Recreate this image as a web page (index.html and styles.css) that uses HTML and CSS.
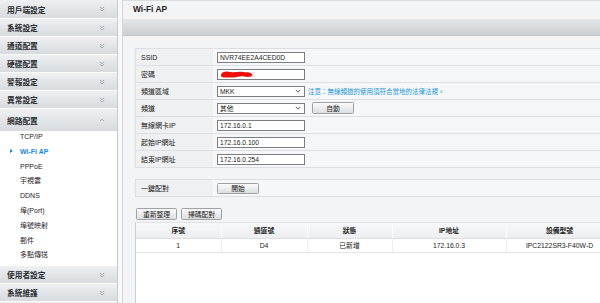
FILE: index.html
```html
<!DOCTYPE html>
<html lang="zh-Hant">
<head>
<meta charset="utf-8">
<title>Wi-Fi AP</title>
<link rel="stylesheet" href="styles.css">
</head>
<body>
<div class="app">
  <aside class="sidebar">
    <div class="nav-head"><span>用戶端設定</span><svg class="chev" viewBox="0 0 7 7"><path d="M1 1.2 L3.5 3 L6 1.2 M1 3.8 L3.5 5.6 L6 3.8"/></svg></div>
    <div class="nav-head"><span>系統設定</span><svg class="chev" viewBox="0 0 7 7"><path d="M1 1.2 L3.5 3 L6 1.2 M1 3.8 L3.5 5.6 L6 3.8"/></svg></div>
    <div class="nav-head"><span>通道配置</span><svg class="chev" viewBox="0 0 7 7"><path d="M1 1.2 L3.5 3 L6 1.2 M1 3.8 L3.5 5.6 L6 3.8"/></svg></div>
    <div class="nav-head"><span>硬碟配置</span><svg class="chev" viewBox="0 0 7 7"><path d="M1 1.2 L3.5 3 L6 1.2 M1 3.8 L3.5 5.6 L6 3.8"/></svg></div>
    <div class="nav-head"><span>警報設定</span><svg class="chev" viewBox="0 0 7 7"><path d="M1 1.2 L3.5 3 L6 1.2 M1 3.8 L3.5 5.6 L6 3.8"/></svg></div>
    <div class="nav-head"><span>異常設定</span><svg class="chev" viewBox="0 0 7 7"><path d="M1 1.2 L3.5 3 L6 1.2 M1 3.8 L3.5 5.6 L6 3.8"/></svg></div>
    <div class="nav-head open"><span>網路配置</span><svg class="chev" viewBox="0 0 7 7"><path d="M1.2 4.6 L3.5 2.6 L5.8 4.6"/></svg></div>
    <ul class="sub">
      <li>TCP/IP</li>
      <li class="active">Wi-Fi AP</li>
      <li>PPPoE</li>
      <li>宇視雲</li>
      <li>DDNS</li>
      <li>埠(Port)</li>
      <li>埠號映射</li>
      <li>郵件</li>
      <li>多點傳送</li>
    </ul>
    <div class="nav-head"><span>使用者設定</span><svg class="chev" viewBox="0 0 7 7"><path d="M1 1.2 L3.5 3 L6 1.2 M1 3.8 L3.5 5.6 L6 3.8"/></svg></div>
    <div class="nav-head"><span>系統維護</span><svg class="chev" viewBox="0 0 7 7"><path d="M1 1.2 L3.5 3 L6 1.2 M1 3.8 L3.5 5.6 L6 3.8"/></svg></div>
  </aside>
  <div class="gutter"></div>
  <main class="main">
    <div class="title">Wi-Fi AP</div>
    <div class="band"></div>
    <div class="content">
      <table class="form">
        <tr><td class="lbl">SSID</td><td><div class="field">NVR74EE2A4CED0D</div></td></tr>
        <tr><td class="lbl">密碼</td><td><div class="field pw"><span class="ghost">••••0S</span><svg class="redact" viewBox="0 0 36 11"><path d="M2 6 C3 2 8 2 12 3 C16 4 20 2 25 3 C29 3.5 33 3 34 5.5 C35 8 30 8.5 26 7.5 C21 6.5 17 9 12 8.6 C7 8.2 1.5 9.5 2 6 Z"/></svg></div></td></tr>
        <tr><td class="lbl">頻道區域</td><td><div class="row-inline"><div class="field sel">MKK<svg class="arrow" viewBox="0 0 8 5"><path d="M1 1 L4 4 L7 1"/></svg></div><span class="note">注意：無線頻道的使用須符合當地的法律法規。</span></div></td></tr>
        <tr><td class="lbl">頻道</td><td><div class="row-inline"><div class="field sel">其他<svg class="arrow" viewBox="0 0 8 5"><path d="M1 1 L4 4 L7 1"/></svg></div><button class="btn auto">自動</button></div></td></tr>
        <tr><td class="lbl">無線網卡IP</td><td><div class="field">172.16.0.1</div></td></tr>
        <tr><td class="lbl">起始IP網址</td><td><div class="field">172.16.0.100</div></td></tr>
        <tr><td class="lbl">結束IP網址</td><td><div class="field">172.16.0.254</div></td></tr>
      </table>
      <table class="form pair">
        <tr><td class="lbl">一鍵配對</td><td><button class="btn start">開始</button></td></tr>
      </table>
      <div class="actions">
        <button class="btn act">重新整理</button>
        <button class="btn act">掃碼配對</button>
      </div>
      <div class="grid">
        <table class="list">
          <colgroup><col class="c1"><col class="c2"><col class="c3"><col class="c4"><col class="c5"></colgroup>
          <thead><tr><th>序號</th><th>通道號</th><th>狀態</th><th>IP地址</th><th>設備型號</th></tr></thead>
          <tbody><tr><td>1</td><td>D4</td><td>已新增</td><td>172.16.0.3</td><td>IPC2122SR3-F40W-D</td></tr></tbody>
        </table>
      </div>
    </div>
  </main>
</div>
</body>
</html>
```

FILE: styles.css
```css
* { box-sizing: border-box; }
html, body { margin: 0; padding: 0; }
body {
  width: 600px;
  height: 303px;
  overflow: hidden;
  background: #f3f4f6;
  font-family: "Liberation Sans", "Noto Sans CJK TC", sans-serif;
  color: #222;
}
.app { display: flex; height: 303px; }

/* sidebar */
.sidebar {
  width: 118px;
  flex: none;
  background: #eceef0;
  border-right: 1px solid #c7cbcf;
}
.nav-head {
  height: 18px;
  display: flex;
  align-items: center;
  justify-content: space-between;
  padding: 0 12px 0 7px;
  background: linear-gradient(#eef0f2, #d7dbde);
  border-bottom: 1px solid #fbfcfc;
  font-size: 7.7px;
  font-weight: bold;
  color: #2a2d31;
}
.nav-head:first-child { height: 19px; }
.nav-head.open { height: 23px; }
.chev { width: 6px; height: 6px; fill: none; stroke: #9aa3aa; stroke-width: 1; }
.sub {
  list-style: none;
  margin: 0;
  padding: 0;
  background: #fff;
  height: 134px;
}
.sub li {
  position: relative;
  height: 14.8px;
  line-height: 9px;
  padding-left: 20px;
  font-size: 7px;
  color: #1f2226;
}
.sub li.active { color: #1a8ad4; font-weight: bold; }
.sub li.active::before {
  content: "";
  position: absolute;
  left: 10px;
  top: 2px;
  border-left: 3px solid #1a8ad4;
  border-top: 2.5px solid transparent;
  border-bottom: 2.5px solid transparent;
}

.gutter {
  width: 5px;
  flex: none;
  background: #f7f8f9;
  border-right: 1px solid #d5d8db;
}

/* main */
.main {
  flex: 1;
  min-width: 0;
  overflow: hidden;
  display: flex;
  flex-direction: column;
}
.title {
  height: 19px;
  border-top: 1px solid #d9dbde;
  padding-left: 10px;
  line-height: 17px;
  font-size: 8.4px;
  font-weight: bold;
  color: #1e2124;
}
.band {
  height: 17px;
  flex: none;
  background: linear-gradient(#e4e7e9, #cacfd2);
  border-bottom: 1px solid #c4c8cb;
}
.content {
  flex: 1;
  padding: 12px 0 0 12px;
  display: flex;
  flex-direction: column;
  width: 489px;
}
.form {
  border-collapse: collapse;
  width: 477px;
  font-size: 7px;
}
.form td {
  height: 17px;
  padding: 0;
  border-top: 1px solid #dcdee1;
  border-bottom: 1px solid #dcdee1;
  background: #f6f7f8;
}
.form td.lbl {
  width: 78px;
  padding-left: 5px;
  background: #eef0f2;
  border-left: 1px solid #dcdee1;
  border-right: 1px solid #f9fafb;
  color: #222;
}
.form td:last-child { padding-left: 3px; }
.form.pair { margin-top: 11px; }
.field {
  position: relative;
  width: 88px;
  height: 11px;
  border: 1px solid #7b7f84;
  background: #fff;
  font-size: 6.7px;
  line-height: 9px;
  padding-left: 2px;
  color: #1b1b1b;
  white-space: nowrap;
}
.field.sel { width: 88px; }
.arrow {
  position: absolute;
  right: 3px;
  top: 2.5px;
  width: 6px;
  height: 4px;
  fill: none;
  stroke: #333;
  stroke-width: 1.1;
}
.ghost { color: #f2c9c9; padding-left: 18px; }
.redact {
  position: absolute;
  left: 1px;
  top: -1px;
  width: 35px;
  height: 11px;
  fill: #ee0e0e;
}
.row-inline { display: flex; align-items: center; }
.note {
  margin-left: 3px;
  font-size: 6.5px;
  color: #2296d6;
  white-space: nowrap;
}
.btn {
  font-family: "Liberation Sans", "Noto Sans CJK TC", sans-serif;
  font-size: 6.8px;
  color: #1b1b1b;
  height: 11px;
  padding: 0;
  line-height: 9px;
  border: 1px solid #9ea2a6;
  border-radius: 1.5px;
  background: linear-gradient(#fbfbfb, #dcdee0);
}
.btn.auto { width: 42px; margin-left: 7px; height: 12px; }
.btn.start { width: 42px; height: 11px; margin-left: 0; }
.actions {
  display: flex;
  gap: 4px;
  margin-top: 11px;
  height: 12px;
  padding-left: 1px;
}
.btn.act { width: 41px; height: 12px; }
.grid {
  margin-top: 2px;
  flex: 1;
  width: 477px;
  background: #fff;
  border-left: 1px solid #cdd0d3;
  border-top: 1px solid #dfe1e3;
}
.list {
  border-collapse: collapse;
  width: 477px;
  table-layout: fixed;
  font-size: 6.8px;
  text-align: center;
}
.list col.c1 { width: 85px; }
.list col.c2 { width: 86px; }
.list col.c3 { width: 85px; }
.list col.c4 { width: 114px; }
.list col.c5 { width: 107px; }
.list th {
  height: 15px;
  padding: 0;
  font-weight: bold;
  color: #222;
  background: linear-gradient(#f7f8f9, #eceef0);
  border-right: 1px solid #fff;
  border-bottom: 1px solid #dcdee1;
}
.list td {
  height: 14px;
  padding: 0;
  color: #222;
  border-right: 1px solid #eceef0;
  border-bottom: 1px solid #e3e5e7;
}
```
